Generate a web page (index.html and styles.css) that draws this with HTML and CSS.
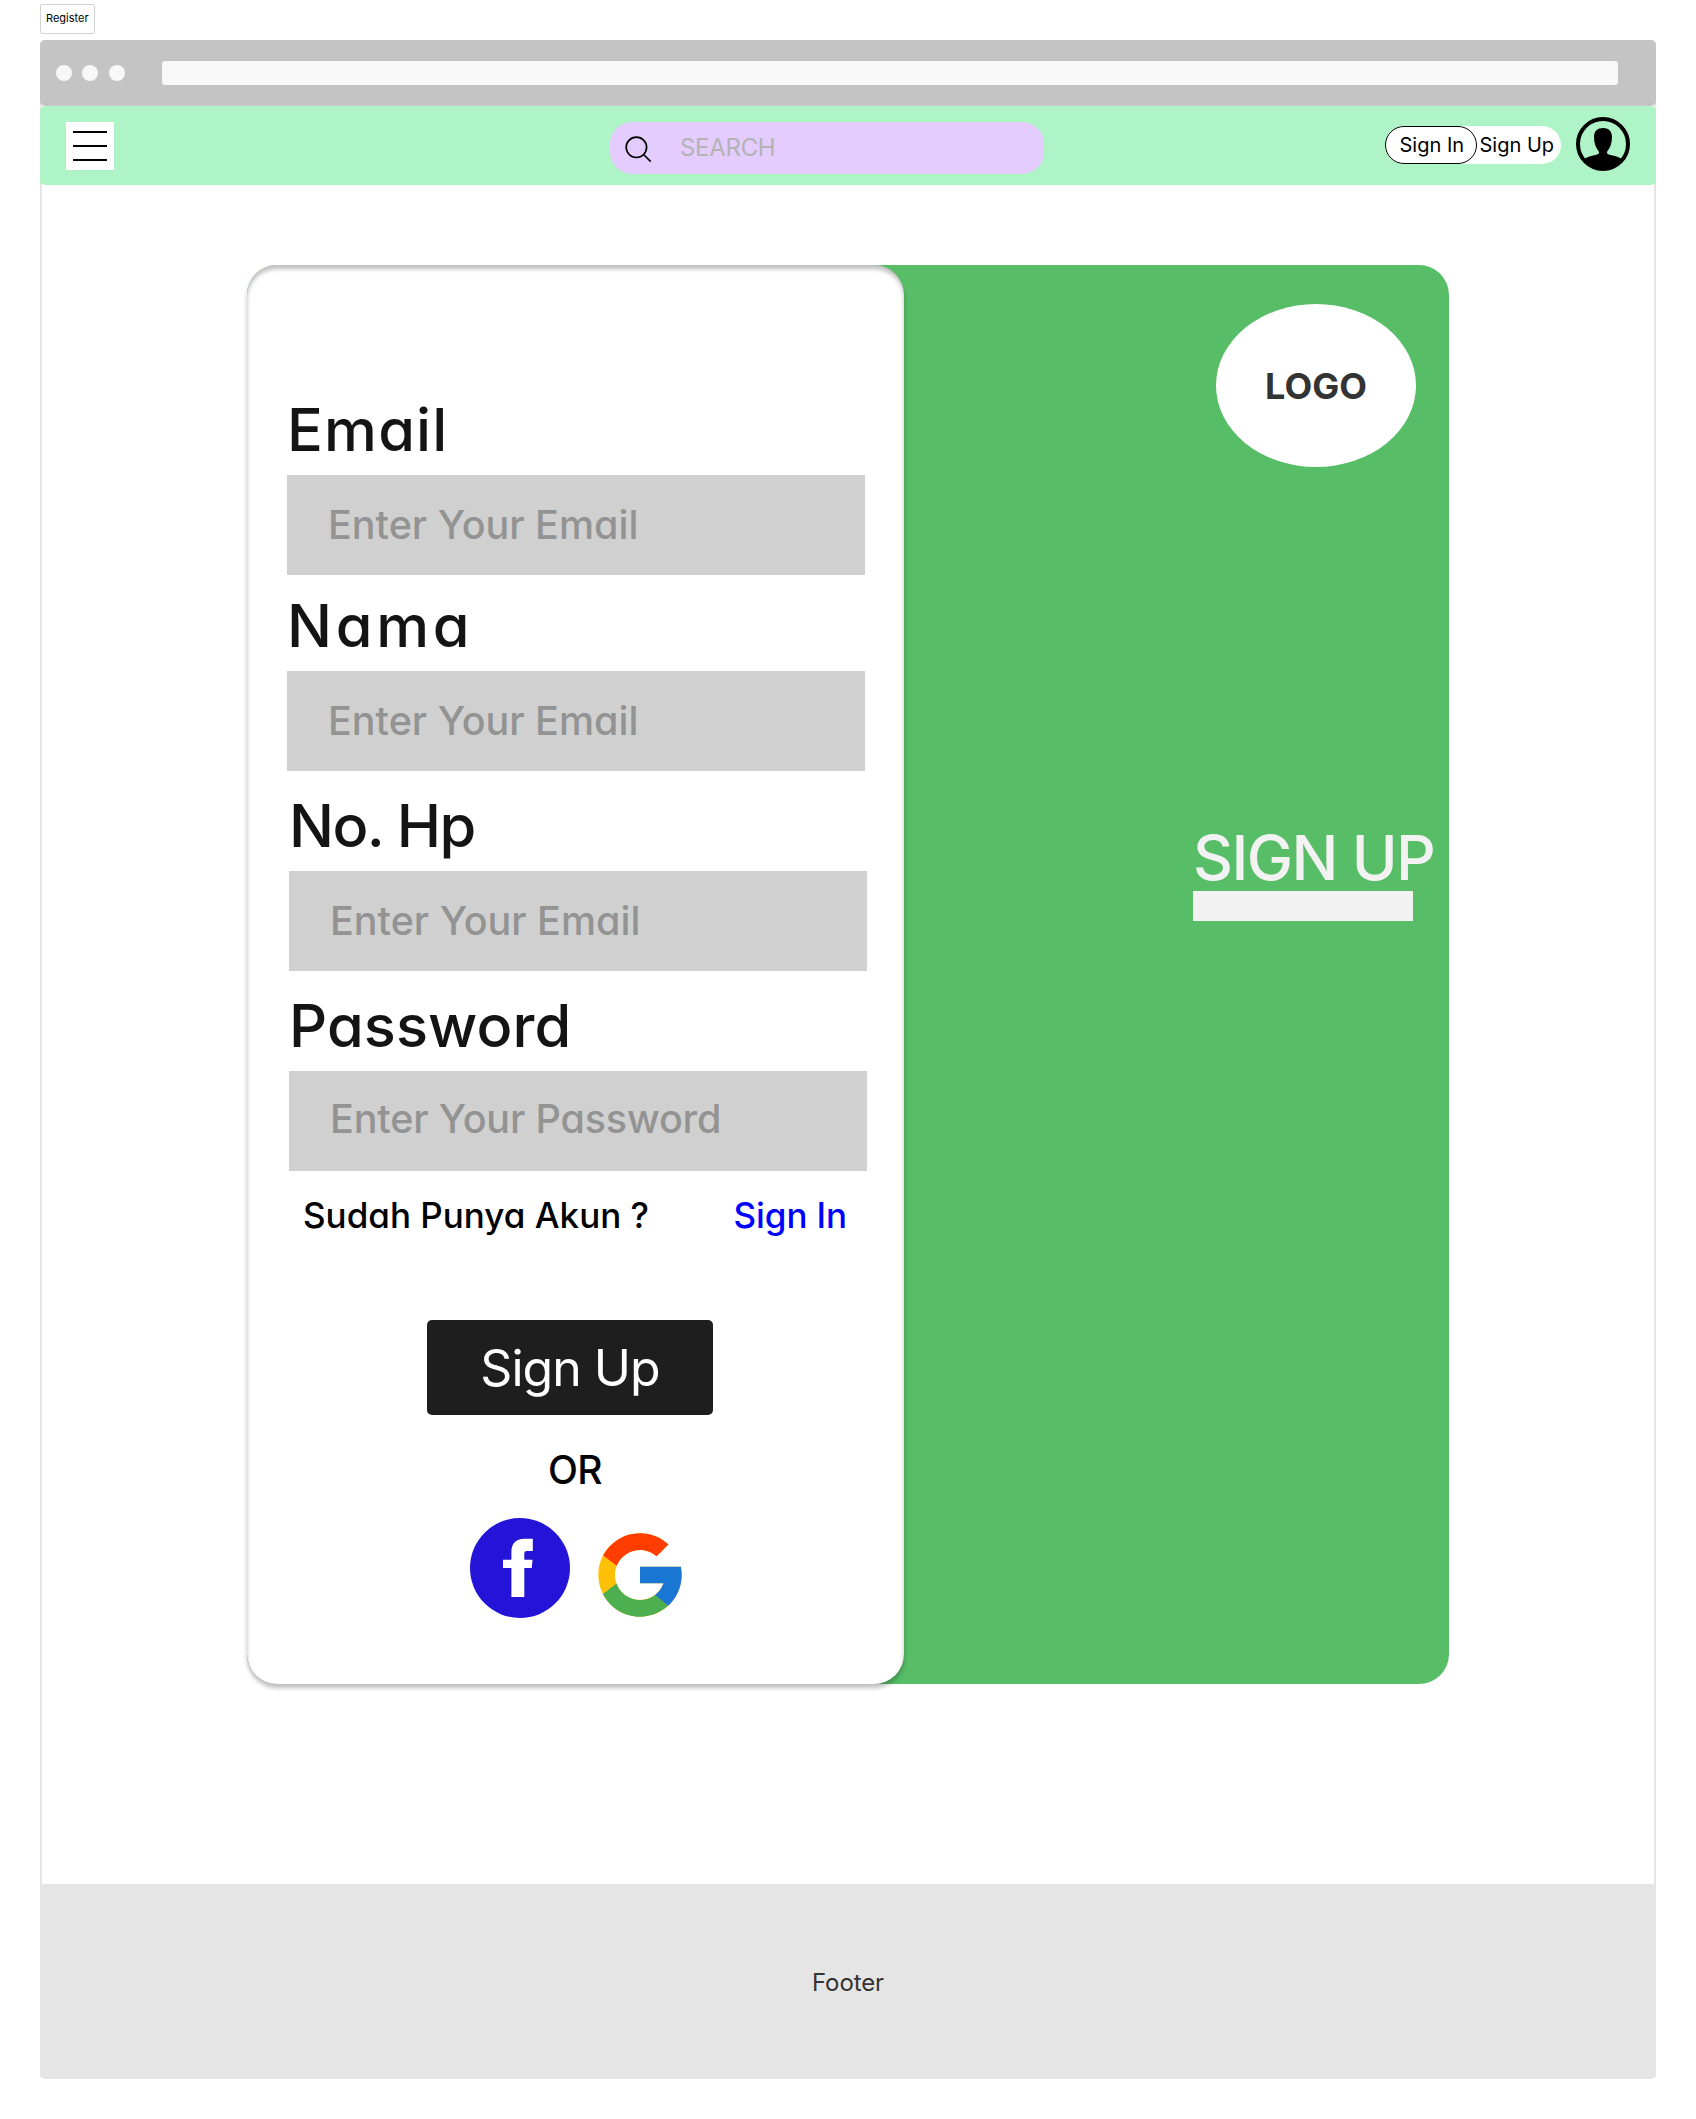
FILE: index.html
```html
<!DOCTYPE html>
<html lang="id">
<head>
<meta charset="utf-8">
<title>Register</title>
<link rel="stylesheet" href="styles.css">
</head>
<body>
<div class="tag">Register</div>
<div class="window">
  <div class="chrome">
    <i class="dot"></i><i class="dot"></i><i class="dot dot-last"></i>
    <div class="address"></div>
  </div>
  <header class="navbar">
    <button class="menu" aria-label="Menu"><i></i><i></i><i></i></button>
    <div class="search">
      <svg class="search-icon" width="28" height="28" viewBox="0 0 28 28" fill="none" stroke="#000" stroke-width="1.7">
        <circle cx="12.4" cy="12.3" r="10.2"/>
        <path d="M19.6 19.5 26.7 26.6"/>
      </svg>
      <span>SEARCH</span>
    </div>
    <div class="toggle">
      <a class="toggle-in">Sign In</a>
      <a class="toggle-up">Sign Up</a>
    </div>
    <svg class="avatar" width="54" height="54" viewBox="0 0 54 54">
      <circle cx="27" cy="27" r="25" fill="none" stroke="#000" stroke-width="4"/>
      <path d="M27 11c-5.500 0-9 3.200-9 9 0 6 1.800 11 4.800 14.500 .6 2-.3 2.700-2.300 3.200-4.500 1-8.500 1.500-11.500 3.800L13 48.500C21 54 33 54 41 48.500L45 41.500c-3-2.300-7-2.800-11.500-3.800-2-.5-2.900-1.200-2.300-3.200C34.200 31 36 26 36 20c0-5.800-3.500-9-9-9z"/>
    </svg>
  </header>
  <main class="content">
    <section class="card">
      <form class="form">
        <div class="field">
          <label class="label label-email">Email</label>
          <div class="input">Enter Your Email</div>
        </div>
        <div class="field field-name">
          <label class="label label-name">Nama</label>
          <div class="input">Enter Your Email</div>
        </div>
        <div class="field field-shifted">
          <label class="label label-phone">No. Hp</label>
          <div class="input">Enter Your Email</div>
        </div>
        <div class="field field-shifted">
          <label class="label label-password">Password</label>
          <div class="input input-password">Enter Your Password</div>
        </div>
        <div class="account">
          <span>Sudah Punya Akun ?</span>
          <a class="signin">Sign In</a>
        </div>
        <button type="button" class="submit">Sign Up</button>
        <div class="or">OR</div>
        <div class="social">
          <svg width="100" height="100" viewBox="0 0 100 100">
            <circle cx="50" cy="50" r="50" fill="#2314d7"/>
            <path fill="#fff" d="M41.400 79V50H33V41.700h8.400V34c0-8.500 4.600-13.300 12.600-13.300h8.800V33h-5.800c-2 0-2.700 1-2.700 2.700v6h8.300L61.700 50h-7.400v29z"/>
          </svg>
          <svg class="google" width="100" height="100" viewBox="0 0 48 48">
            <path fill="#FFC107" d="M43.611 20.083H42V20H24v8h11.303c-1.649 4.657-6.080 8-11.303 8-6.627 0-12-5.373-12-12s5.373-12 12-12c3.059 0 5.842 1.154 7.961 3.039l5.657-5.657C34.046 6.053 29.268 4 24 4 12.955 4 4 12.955 4 24s8.955 20 20 20 20-8.955 20-20c0-1.341-.138-2.650-.389-3.917z"/>
            <path fill="#FF3D00" d="m6.306 14.691 6.571 4.819C14.655 15.108 18.961 12 24 12c3.059 0 5.842 1.154 7.961 3.039l5.657-5.657C34.046 6.053 29.268 4 24 4 16.318 4 9.656 8.337 6.306 14.691z"/>
            <path fill="#4CAF50" d="M24 44c5.166 0 9.860-1.977 13.409-5.192l-6.190-5.238C29.211 35.091 26.715 36 24 36c-5.202 0-9.619-3.317-11.283-7.946l-6.522 5.025C9.505 39.556 16.227 44 24 44z"/>
            <path fill="#1976D2" d="M43.611 20.083H42V20H24v8h11.303c-.792 2.237-2.231 4.166-4.087 5.571l6.193 5.238C36.971 39.205 44 34 44 24c0-1.341-.138-2.650-.389-3.917z"/>
          </svg>
        </div>
      </form>
      <aside class="banner">
        <div class="logo">LOGO</div>
        <div class="banner-title">SIGN UP</div>
        <div class="banner-bar"></div>
      </aside>
    </section>
  </main>
  <footer class="footer">Footer</footer>
</div>
</body>
</html>
```
FILE: styles.css
```css
* {
  box-sizing: border-box;
}

body {
  margin: 0;
  padding: 4px 40px 40px;
  background: #fff;
  color: #000;
  font-family: Inter, sans-serif;
}

.tag {
  width: 55px;
  height: 30px;
  margin-bottom: 6px;
  padding-left: 5px;
  border: 1px solid #d4d4d4;
  border-radius: 2px;
  font-size: 11px;
  line-height: 27px;
}

.window {
  display: flex;
  flex-direction: column;
  height: 2039px;
  border-radius: 5px;
  background: linear-gradient(#e5e5e5, #e5e5e5) 0 0 / 2px 100% no-repeat,
    linear-gradient(#e5e5e5, #e5e5e5) 100% 0 / 2px 100% no-repeat;
}

.chrome {
  display: flex;
  align-items: center;
  gap: 10px;
  height: 66px;
  padding: 0 38px 0 16px;
  border-radius: 5px;
  background: #c4c4c4;
}

.dot {
  width: 16px;
  height: 16px;
  border-radius: 50%;
  background: #f8f8f8;
}

.dot-last {
  margin-left: 1px;
}

.address {
  flex: 1;
  height: 24px;
  margin-left: 27px;
  border-radius: 3px;
  background: #f8f8f8;
}

.navbar {
  display: flex;
  align-items: flex-start;
  height: 79px;
  padding: 11px 26px 0;
  border-radius: 5px;
  background: #aff4c6;
}

.menu {
  display: flex;
  flex-direction: column;
  gap: 12px;
  width: 48px;
  height: 48px;
  margin-top: 5px;
  padding: 9px 7px;
  border: 0;
  background: #fff;
}

.menu i {
  width: 34px;
  height: 2px;
  background: #000;
}

.search {
  display: flex;
  align-items: center;
  width: 434px;
  height: 52px;
  margin: 5px 0 0 496px;
  padding-left: 14px;
  border-radius: 22px;
  background: #e4ccff;
  color: #b3b3b3;
  font-size: 24px;
  letter-spacing: -0.3px;
}

.search span {
  margin: -2px 0 0 28px;
}

.search-icon {
  margin-top: 2px;
}

.toggle {
  display: flex;
  width: 176px;
  height: 38px;
  margin: 9px 15px 0 341px;
  border-radius: 19px;
  background: #fff;
  font-size: 20px;
  line-height: 38px;
}

.toggle-in {
  width: 92px;
  padding-left: 13.5px;
  border: 1px solid #000;
  border-radius: 19px;
  line-height: 36px;
}

.toggle-up {
  padding-left: 2.5px;
}

.content {
  flex: 1;
  padding: 80px 207px 0;
}

.card {
  display: flex;
  width: 1202px;
  height: 1419px;
  border-radius: 30px;
  background: #57bd67;
}

.form {
  width: 657px;
  padding: 135px 0 0 40px;
  border-radius: 30px;
  background: #fff;
  box-shadow: 0 4px 4px rgba(0, 0, 0, 0.25), inset 0 4px 4px rgba(0, 0, 0, 0.25);
  font-weight: 500;
  font-feature-settings: "cv11";
}

.field {
  width: 578px;
  margin-bottom: 21px;
}

.field-name {
  margin-bottom: 25px;
}

.field-shifted {
  margin: 0 0 25px 2px;
}

.label {
  display: block;
  margin-bottom: 17px;
  color: #141414;
  font-size: 59.5px;
  line-height: 58px;
  white-space: nowrap;
}

.label-email {
  letter-spacing: 1.2px;
}

.label-name {
  letter-spacing: 3.7px;
}

.label-phone {
  letter-spacing: -1.6px;
}

.label-password {
  letter-spacing: 0.1px;
}

.input {
  height: 100px;
  padding-left: 41px;
  background: #d0d0d0;
  color: #939393;
  font-size: 39.5px;
  line-height: 100px;
  letter-spacing: 0;
}

.input-password {
  line-height: 96px;
  letter-spacing: -0.15px;
}

.account {
  display: flex;
  justify-content: space-between;
  width: 544px;
  margin: -6px 0 0 16px;
  font-size: 35px;
  line-height: 50px;
  letter-spacing: 0;
}

.signin {
  color: #00f;
  letter-spacing: -0.1px;
}

.submit {
  display: block;
  width: 286px;
  height: 95px;
  margin: 80px 0 0 140px;
  padding: 0;
  border: 0;
  border-radius: 5px;
  background: #1e1e1e;
  color: #fff;
  font: 400 50px/97px Inter, sans-serif;
  letter-spacing: -1px;
}

.or {
  width: 576px;
  margin-top: 35px;
  font-size: 39px;
  line-height: 40px;
  letter-spacing: -0.5px;
  text-align: center;
}

.social {
  display: flex;
  gap: 19.6px;
  margin: 28px 0 0 183px;
}

.google {
  margin-top: 7px;
}

.banner {
  padding: 39px 0 0 289px;
}

.logo {
  width: 200px;
  height: 163px;
  margin-left: 23px;
  border-radius: 50%;
  background: #fff;
  color: #333;
  font-size: 36px;
  font-weight: 700;
  line-height: 165px;
  text-align: center;
}

.banner-title {
  margin-top: 361px;
  color: #f2f2f2;
  font-size: 62px;
  font-weight: 500;
  line-height: 60px;
  letter-spacing: -1.6px;
  white-space: nowrap;
}

.banner-bar {
  width: 220px;
  height: 30px;
  margin-top: 3px;
  background: #f2f2f2;
}

.footer {
  height: 195px;
  border-radius: 5px;
  background: #e5e5e5;
  color: #333;
  font-size: 24px;
  line-height: 197px;
  letter-spacing: -0.1px;
  text-align: center;
}
```
